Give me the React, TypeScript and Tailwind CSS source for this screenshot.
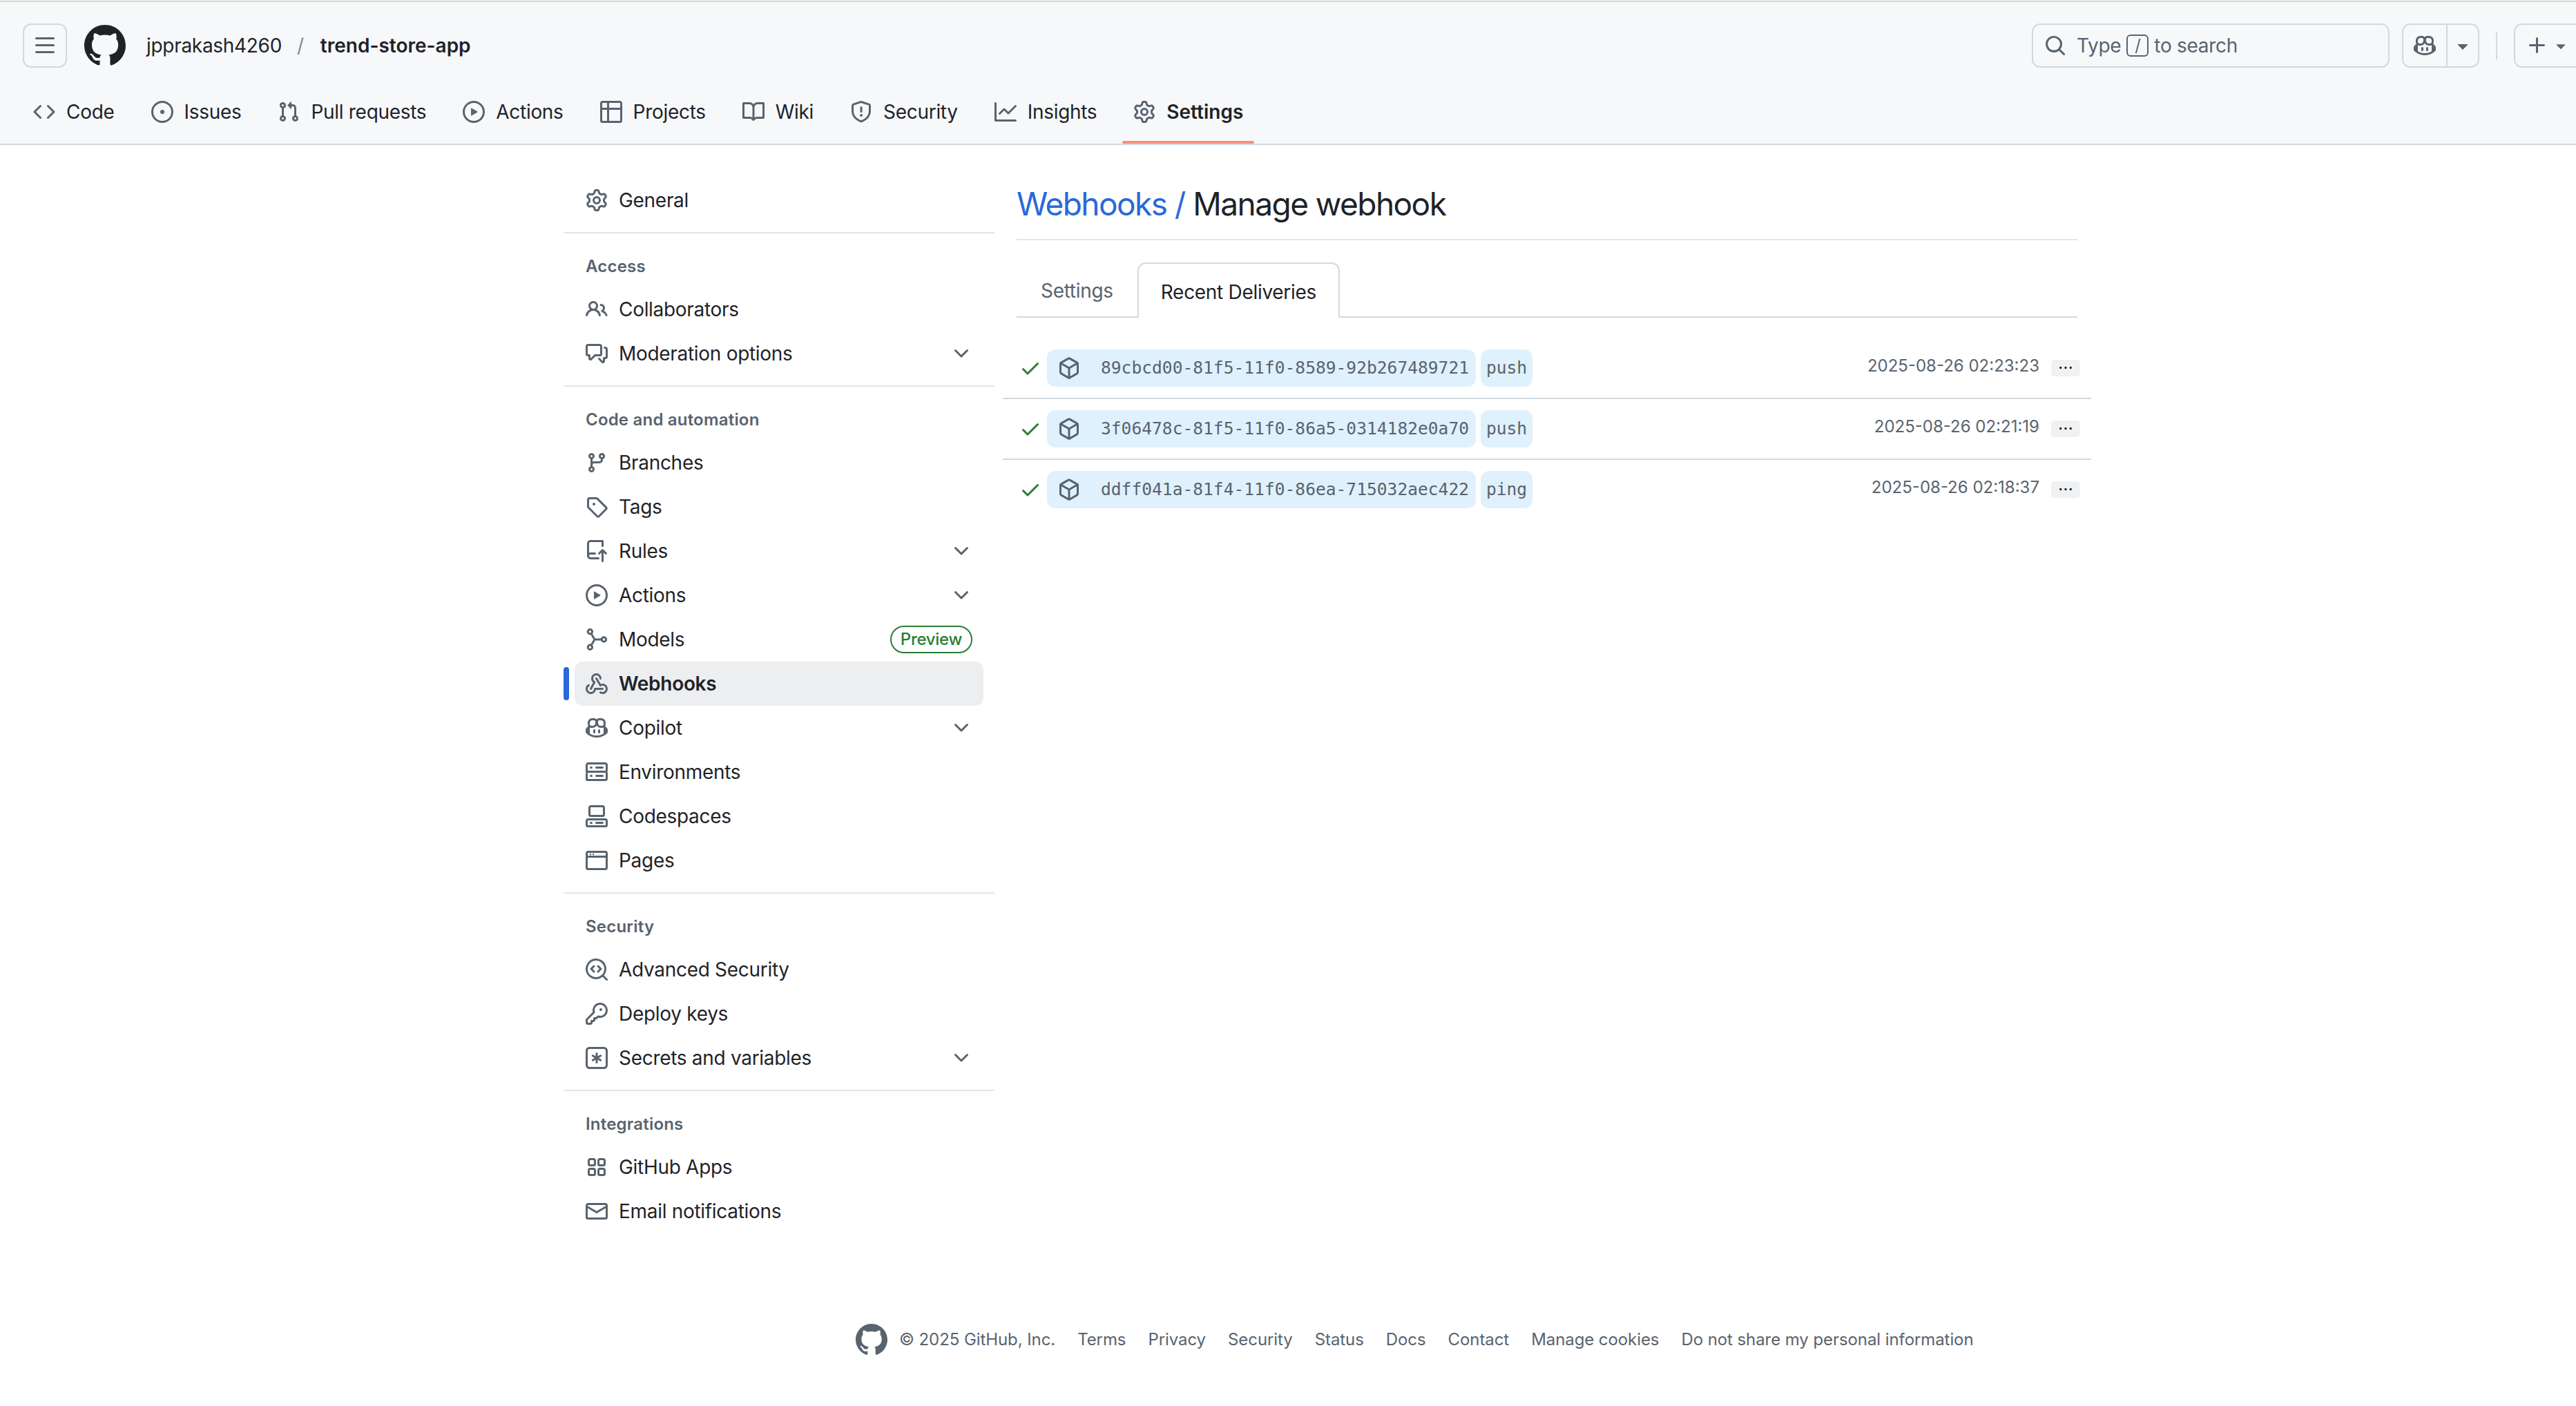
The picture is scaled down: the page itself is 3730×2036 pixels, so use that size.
import React from "react";

const icons: Record<string, string> = {
  bars: "M1 2.75A.75.75 0 0 1 1.75 2h12.5a.75.75 0 0 1 0 1.5H1.75A.75.75 0 0 1 1 2.75Zm0 5A.75.75 0 0 1 1.75 7h12.5a.75.75 0 0 1 0 1.5H1.75A.75.75 0 0 1 1 7.75ZM1.75 12h12.5a.75.75 0 0 1 0 1.5H1.75a.75.75 0 0 1 0-1.5Z",
  github: "M8 0c4.42 0 8 3.58 8 8a8.013 8.013 0 0 1-5.45 7.59c-.4.08-.55-.17-.55-.38 0-.27.01-1.13.01-2.2 0-.75-.25-1.23-.54-1.48 1.78-.2 3.65-.88 3.65-3.95 0-.88-.31-1.59-.82-2.15.08-.2.36-1.02-.08-2.12 0 0-.67-.22-2.2.82-.64-.18-1.32-.27-2-.27-.68 0-1.36.09-2 .27-1.53-1.03-2.2-.82-2.2-.82-.44 1.1-.16 1.92-.08 2.12-.51.56-.82 1.28-.82 2.15 0 3.06 1.86 3.75 3.64 3.95-.23.2-.44.55-.51 1.07-.46.21-1.61.55-2.33-.66-.15-.24-.6-.83-1.23-.82-.67.01-.27.38.01.53.34.19.73.9.82 1.13.16.45.68 1.31 2.69.94 0 .67.01 1.3.01 1.49 0 .21-.15.45-.55.38A7.995 7.995 0 0 1 0 8c0-4.42 3.58-8 8-8Z",
  code: "m11.28 3.22 4.25 4.25a.75.75 0 0 1 0 1.06l-4.25 4.25a.749.749 0 0 1-1.275-.326.749.749 0 0 1 .215-.734L13.94 8l-3.72-3.72a.749.749 0 0 1 .326-1.275.749.749 0 0 1 .734.215Zm-6.56 0a.751.751 0 0 1 1.042.018.751.751 0 0 1 .018 1.042L2.06 8l3.72 3.72a.749.749 0 0 1-.326 1.275.749.749 0 0 1-.734-.215L.47 8.53a.75.75 0 0 1 0-1.06Z",
  issue: "M8 9.5a1.5 1.5 0 1 0 0-3 1.5 1.5 0 0 0 0 3Z M8 0a8 8 0 1 1 0 16A8 8 0 0 1 8 0ZM1.5 8a6.5 6.5 0 1 0 13 0 6.5 6.5 0 0 0-13 0Z",
  pr: "M1.5 3.25a2.25 2.25 0 1 1 3 2.122v5.256a2.251 2.251 0 1 1-1.5 0V5.372A2.25 2.25 0 0 1 1.5 3.25Zm5.677-.177L9.573.677A.25.25 0 0 1 10 .854V2.5h1A2.5 2.5 0 0 1 13.5 5v5.628a2.251 2.251 0 1 1-1.5 0V5a1 1 0 0 0-1-1h-1v1.646a.25.25 0 0 1-.427.177L7.177 3.427a.25.25 0 0 1 0-.354ZM3.75 2.5a.75.75 0 1 0 0 1.5.75.75 0 0 0 0-1.5Zm0 9.5a.75.75 0 1 0 0 1.5.75.75 0 0 0 0-1.5Zm8.25.75a.75.75 0 1 0 1.5 0 .75.75 0 0 0-1.5 0Z",
  play: "M8 0a8 8 0 1 1 0 16A8 8 0 0 1 8 0ZM1.5 8a6.5 6.5 0 1 0 13 0 6.5 6.5 0 0 0-13 0Zm4.879-2.773 4.264 2.559a.25.25 0 0 1 0 .428l-4.264 2.559A.25.25 0 0 1 6 10.559V5.442a.25.25 0 0 1 .379-.215Z",
  table: "M0 1.75C0 .784.784 0 1.75 0h12.5C15.216 0 16 .784 16 1.75v12.5A1.75 1.75 0 0 1 14.25 16H1.75A1.75 1.75 0 0 1 0 14.25ZM6.5 6.5v8h7.75a.25.25 0 0 0 .25-.25V6.5Zm8-1.5V1.75a.25.25 0 0 0-.25-.25H6.5V5Zm-13 1.5v7.75c0 .138.112.25.25.25H5v-8ZM5 5V1.5H1.75a.25.25 0 0 0-.25.25V5Z",
  book: "M0 1.75A.75.75 0 0 1 .75 1h4.253c1.227 0 2.317.59 3 1.501A3.743 3.743 0 0 1 11.006 1h4.245a.75.75 0 0 1 .75.75v10.5a.75.75 0 0 1-.75.75h-4.507a2.25 2.25 0 0 0-1.591.659l-.622.621a.75.75 0 0 1-1.06 0l-.622-.621A2.25 2.25 0 0 0 5.258 13H.75a.75.75 0 0 1-.75-.75Zm7.251 10.324.004-5.073-.002-2.253A2.25 2.25 0 0 0 5.003 2.5H1.5v9h3.757a3.75 3.75 0 0 1 1.994.574ZM8.755 4.75l-.004 7.322a3.752 3.752 0 0 1 1.992-.572H14.5v-9h-3.495a2.25 2.25 0 0 0-2.25 2.25Z",
  shield: "M7.467.133a1.748 1.748 0 0 1 1.066 0l5.25 1.68A1.75 1.75 0 0 1 15 3.48V7c0 1.566-.32 3.182-1.303 4.682-.983 1.498-2.585 2.813-5.032 3.855a1.697 1.697 0 0 1-1.33 0c-2.447-1.042-4.049-2.357-5.032-3.855C1.32 10.182 1 8.566 1 7V3.48a1.75 1.75 0 0 1 1.217-1.667Zm.61 1.429a.25.25 0 0 0-.153 0l-5.25 1.68a.25.25 0 0 0-.174.238V7c0 1.358.275 2.666 1.057 3.86.784 1.194 2.121 2.34 4.366 3.297a.196.196 0 0 0 .154 0c2.245-.956 3.582-2.104 4.366-3.298C13.225 9.666 13.5 8.36 13.5 7V3.48a.251.251 0 0 0-.174-.237l-5.25-1.68ZM8.75 4.75v3a.75.75 0 0 1-1.5 0v-3a.75.75 0 0 1 1.5 0ZM9 10.5a1 1 0 1 1-2 0 1 1 0 0 1 2 0Z",
  graph: "M1.5 1.75V13.5h13.75a.75.75 0 0 1 0 1.5H.75a.75.75 0 0 1-.75-.75V1.75a.75.75 0 0 1 1.5 0Zm14.28 2.53-5.25 5.25a.75.75 0 0 1-1.06 0L7 7.06 4.28 9.78a.751.751 0 0 1-1.042-.018.751.751 0 0 1-.018-1.042l3.25-3.25a.75.75 0 0 1 1.06 0L10 7.94l4.72-4.72a.751.751 0 0 1 1.042.018.751.751 0 0 1 .018 1.042Z",
  gear: "M8 0a8.2 8.2 0 0 1 .701.031C9.444.095 9.99.645 10.16 1.29l.288 1.107c.018.066.079.158.212.224.231.114.454.243.668.386.123.082.233.09.299.071l1.103-.303c.644-.176 1.392.021 1.82.63.27.385.506.792.704 1.218.315.675.111 1.422-.364 1.891l-.814.806c-.049.048-.098.147-.088.294.016.257.016.515 0 .772-.01.147.038.246.088.294l.814.806c.475.469.679 1.216.364 1.891a7.977 7.977 0 0 1-.704 1.217c-.428.61-1.176.807-1.82.63l-1.102-.302c-.067-.019-.177-.011-.3.071a5.909 5.909 0 0 1-.668.386c-.133.066-.194.158-.211.224l-.29 1.106c-.168.646-.715 1.196-1.458 1.26a8.006 8.006 0 0 1-1.402 0c-.743-.064-1.289-.614-1.458-1.26l-.289-1.106c-.018-.066-.079-.158-.212-.224a5.738 5.738 0 0 1-.668-.386c-.123-.082-.233-.09-.299-.071l-1.103.303c-.644.176-1.392-.021-1.82-.63a8.12 8.12 0 0 1-.704-1.218c-.315-.675-.111-1.422.363-1.891l.815-.806c.05-.048.098-.147.088-.294a6.214 6.214 0 0 1 0-.772c.01-.147-.038-.246-.088-.294l-.815-.806C.635 6.045.431 5.298.746 4.623a7.92 7.92 0 0 1 .704-1.217c.428-.61 1.176-.807 1.82-.63l1.102.302c.067.019.177.011.3-.071.214-.143.437-.272.668-.386.133-.066.194-.158.211-.224l.29-1.106C6.009.645 6.556.095 7.299.03 7.53.01 7.764 0 8 0Zm-.571 1.525c-.036.003-.108.036-.137.146l-.289 1.105c-.147.561-.549.967-.998 1.189-.173.086-.34.183-.5.29-.417.278-.97.423-1.529.27l-1.103-.303c-.109-.03-.175.016-.195.045-.22.312-.412.644-.573.99-.014.031-.021.11.059.19l.815.806c.411.406.562.957.53 1.456a4.709 4.709 0 0 0 0 .582c.032.499-.119 1.05-.53 1.456l-.815.806c-.081.08-.073.159-.059.19.162.346.353.677.573.989.02.03.085.076.195.046l1.102-.303c.56-.153 1.113-.008 1.53.27.161.107.328.204.501.29.447.222.85.629.997 1.189l.289 1.105c.029.109.101.143.137.146a6.6 6.6 0 0 0 1.142 0c.036-.003.108-.036.137-.146l.289-1.105c.147-.561.549-.967.998-1.189.173-.086.34-.183.5-.29.417-.278.97-.423 1.529-.27l1.103.303c.109.029.175-.016.195-.045.22-.313.411-.644.573-.99.014-.031.021-.11-.059-.19l-.815-.806c-.411-.406-.562-.957-.53-1.456a4.709 4.709 0 0 0 0-.582c-.032-.499.119-1.05.53-1.456l.815-.806c.081-.08.073-.159.059-.19a6.464 6.464 0 0 0-.573-.989c-.02-.03-.085-.076-.195-.046l-1.102.303c-.56.153-1.113.008-1.53-.27a4.44 4.44 0 0 0-.501-.29c-.447-.222-.85-.629-.997-1.189l-.289-1.105c-.029-.11-.101-.143-.137-.146a6.6 6.6 0 0 0-1.142 0ZM11 8a3 3 0 1 1-6 0 3 3 0 0 1 6 0ZM9.5 8a1.5 1.5 0 1 0-3.001.001A1.5 1.5 0 0 0 9.5 8Z",
  people: "M2 5.5a3.5 3.5 0 1 1 5.898 2.549 5.508 5.508 0 0 1 3.034 4.084.75.75 0 1 1-1.482.235 4 4 0 0 0-7.9 0 .75.75 0 0 1-1.482-.236A5.507 5.507 0 0 1 3.102 8.05 3.493 3.493 0 0 1 2 5.5ZM11 4a3.001 3.001 0 0 1 2.22 5.018 5.01 5.01 0 0 1 2.56 3.012.749.749 0 0 1-.885.954.752.752 0 0 1-.549-.514 3.507 3.507 0 0 0-2.522-2.372.75.75 0 0 1-.574-.73v-.352a.75.75 0 0 1 .416-.672A1.5 1.5 0 0 0 11 5.5.75.75 0 0 1 11 4Zm-5.5-.5a2 2 0 1 0-.001 3.999A2 2 0 0 0 5.5 3.5Z",
  discussion: "M1.75 1h8.5c.966 0 1.75.784 1.75 1.75v5.5A1.75 1.75 0 0 1 10.25 10H7.061l-2.574 2.573A1.458 1.458 0 0 1 2 11.543V10h-.25A1.75 1.75 0 0 1 0 8.25v-5.5C0 1.784.784 1 1.75 1ZM1.5 2.75v5.5c0 .138.112.25.25.25h1a.75.75 0 0 1 .75.75v2.19l2.72-2.72a.749.749 0 0 1 .53-.22h3.5a.25.25 0 0 0 .25-.25v-5.5a.25.25 0 0 0-.25-.25h-8.5a.25.25 0 0 0-.25.25Zm13 2a.25.25 0 0 0-.25-.25h-.5a.75.75 0 0 1 0-1.5h.5c.966 0 1.75.784 1.75 1.75v5.5A1.75 1.75 0 0 1 14.25 12H14v1.543a1.458 1.458 0 0 1-2.487 1.03L9.22 12.28a.749.749 0 0 1 .326-1.275.749.749 0 0 1 .734.215l2.22 2.22v-2.19a.75.75 0 0 1 .75-.75h1a.25.25 0 0 0 .25-.25Z",
  branch: "M9.5 3.25a2.25 2.25 0 1 1 3 2.122V6A2.5 2.5 0 0 1 10 8.5H6a1 1 0 0 0-1 1v1.128a2.251 2.251 0 1 1-1.5 0V5.372a2.25 2.25 0 1 1 1.5 0v1.836A2.493 2.493 0 0 1 6 7h4a1 1 0 0 0 1-1v-.628A2.25 2.25 0 0 1 9.5 3.25Zm-6 0a.75.75 0 1 0 1.5 0 .75.75 0 0 0-1.5 0Zm8.25-.75a.75.75 0 1 0 0 1.5.75.75 0 0 0 0-1.5ZM4.25 12a.75.75 0 1 0 0 1.5.75.75 0 0 0 0-1.5Z",
  tag: "M1 7.775V2.75C1 1.784 1.784 1 2.75 1h5.025c.464 0 .91.184 1.238.513l6.25 6.25a1.75 1.75 0 0 1 0 2.474l-5.026 5.026a1.75 1.75 0 0 1-2.474 0l-6.25-6.25A1.752 1.752 0 0 1 1 7.775Zm1.5 0c0 .066.026.13.073.177l6.25 6.25a.25.25 0 0 0 .354 0l5.025-5.025a.25.25 0 0 0 0-.354l-6.25-6.25a.25.25 0 0 0-.177-.073H2.75a.25.25 0 0 0-.25.25ZM6 5a1 1 0 1 1 0 2 1 1 0 0 1 0-2Z",
  repoPush: "M1 2.5A2.5 2.5 0 0 1 3.5 0h8.75a.75.75 0 0 1 .75.75v3.5a.75.75 0 0 1-1.5 0V1.5h-8a1 1 0 0 0-1 1v6.708A2.493 2.493 0 0 1 3.5 9h3.25a.75.75 0 0 1 0 1.5H3.5a1 1 0 0 0 0 2h5.75a.75.75 0 0 1 0 1.5H3.5A2.5 2.5 0 0 1 1 11.5Zm13.23 7.79h-.001l-1.224-1.224v6.184a.75.75 0 0 1-1.5 0V9.066L10.28 10.29a.75.75 0 0 1-1.06-1.061l2.505-2.504a.75.75 0 0 1 1.06 0L15.29 9.23a.751.751 0 0 1-.018 1.042.751.751 0 0 1-1.042.018Z",
  chevron: "M12.78 5.22a.749.749 0 0 1 0 1.06l-4.25 4.25a.749.749 0 0 1-1.06 0L3.22 6.28a.749.749 0 1 1 1.06-1.06L8 8.939l3.72-3.719a.749.749 0 0 1 1.06 0Z",
  webhook: "M5.5 4.25a2.25 2.25 0 0 1 4.5 0 .75.75 0 0 0 1.5 0 3.75 3.75 0 1 0-6.14 2.889l-2.272 4.258a.75.75 0 0 0 1.324.706L7 7.25a.75.75 0 0 0-.309-1.016A2.25 2.25 0 0 1 5.5 4.25Z M7.364 3.607a.75.75 0 0 1 1.03.257l2.608 4.349a3.75 3.75 0 1 1-.628 6.785.75.75 0 0 1 .752-1.299 2.25 2.25 0 1 0-.033-3.88.75.75 0 0 1-1.03-.256L7.107 4.636a.75.75 0 0 1 .257-1.03Z M2.9 8.776A.75.75 0 0 1 2.625 9.8 2.25 2.25 0 1 0 6 11.75a.75.75 0 0 1 .75-.751h5.5a.75.75 0 0 1 0 1.5H7.425a3.751 3.751 0 1 1-5.55-3.998.75.75 0 0 1 1.024.274Z",
  copilot: "M7.998 15.035c-4.562 0-7.873-2.914-7.998-3.749V9.338c.085-.628.677-1.686 1.588-2.065.013-.07.024-.143.036-.218.029-.183.06-.384.126-.612-.201-.508-.254-1.084-.254-1.656 0-.87.128-1.769.693-2.484.579-.733 1.494-1.124 2.724-1.261 1.206-.134 2.262.034 2.944.765.05.053.096.108.139.165.044-.057.094-.112.143-.165.682-.731 1.738-.899 2.944-.765 1.23.137 2.145.528 2.724 1.261.566.715.693 1.614.693 2.484 0 .572-.053 1.148-.254 1.656.066.228.098.429.126.612.012.076.024.148.037.218.924.385 1.522 1.471 1.591 2.095v1.872c0 .766-3.351 3.795-8.002 3.795Zm0-1.485c2.28 0 4.584-1.11 5.002-1.433V7.862l-.023-.116c-.49.21-1.075.291-1.727.291-1.146 0-2.059-.327-2.71-.991A3.222 3.222 0 0 1 8 6.303a3.24 3.24 0 0 1-.544.743c-.65.664-1.563.991-2.71.991-.652 0-1.236-.081-1.727-.291l-.023.116v4.255c.419.323 2.722 1.433 5.002 1.433ZM6.762 2.83c-.193-.206-.637-.413-1.682-.297-1.019.113-1.479.404-1.713.7-.247.312-.369.789-.369 1.554 0 .793.129 1.171.308 1.371.162.181.519.379 1.442.379.853 0 1.339-.235 1.638-.54.315-.322.527-.827.617-1.553.117-.935-.037-1.395-.241-1.614Zm4.155-.297c-1.044-.116-1.488.091-1.681.297-.204.219-.359.679-.242 1.614.091.726.303 1.231.618 1.553.299.305.784.54 1.638.54.922 0 1.28-.198 1.442-.379.179-.2.308-.578.308-1.371 0-.765-.123-1.242-.37-1.554-.233-.296-.693-.587-1.713-.7Z M6.25 9.037a.75.75 0 0 1 .75.75v1.501a.75.75 0 0 1-1.5 0V9.787a.75.75 0 0 1 .75-.75Zm4.25.75v1.501a.75.75 0 0 1-1.5 0V9.787a.75.75 0 0 1 1.5 0Z",
  server: "M1.75 1h12.5c.966 0 1.75.784 1.75 1.75v4c0 .372-.116.717-.314 1 .198.283.314.628.314 1v4a1.75 1.75 0 0 1-1.75 1.75H1.75A1.75 1.75 0 0 1 0 13.75v-4c0-.358.109-.707.314-1a1.739 1.739 0 0 1-.314-1v-4C0 1.784.784 1 1.75 1ZM1.5 2.75v4c0 .138.112.25.25.25h12.5a.25.25 0 0 0 .25-.25v-4a.25.25 0 0 0-.25-.25H1.75a.25.25 0 0 0-.25.25Zm.25 5.75a.25.25 0 0 0-.25.25v4c0 .138.112.25.25.25h12.5a.25.25 0 0 0 .25-.25v-4a.25.25 0 0 0-.25-.25ZM7 4.75A.75.75 0 0 1 7.75 4h4.5a.75.75 0 0 1 0 1.5h-4.5A.75.75 0 0 1 7 4.75ZM7.75 10h4.5a.75.75 0 0 1 0 1.5h-4.5a.75.75 0 0 1 0-1.5ZM3 4.75A.75.75 0 0 1 3.75 4h.5a.75.75 0 0 1 0 1.5h-.5A.75.75 0 0 1 3 4.75ZM3.75 10h.5a.75.75 0 0 1 0 1.5h-.5a.75.75 0 0 1 0-1.5Z",
  codespaces: "M0 11.25c0-.966.784-1.75 1.75-1.75h12.5c.966 0 1.75.784 1.75 1.75v3A1.75 1.75 0 0 1 14.25 16H1.75A1.75 1.75 0 0 1 0 14.25Zm2-9.5C2 .784 2.784 0 3.75 0h8.5C13.216 0 14 .784 14 1.75v5a1.75 1.75 0 0 1-1.75 1.75h-8.5A1.75 1.75 0 0 1 2 6.75Zm1.75-.25a.25.25 0 0 0-.25.25v5c0 .138.112.25.25.25h8.5a.25.25 0 0 0 .25-.25v-5a.25.25 0 0 0-.25-.25Zm-2 9.5a.25.25 0 0 0-.25.25v3c0 .138.112.25.25.25h12.5a.25.25 0 0 0 .25-.25v-3a.25.25 0 0 0-.25-.25Z M7 12.75a.75.75 0 0 1 .75-.75h4.5a.75.75 0 0 1 0 1.5h-4.5a.75.75 0 0 1-.75-.75Zm-4 0a.75.75 0 0 1 .75-.75h.5a.75.75 0 0 1 0 1.5h-.5a.75.75 0 0 1-.75-.75Z",
  browser: "M0 2.75C0 1.784.784 1 1.75 1h12.5c.966 0 1.75.784 1.75 1.75v10.5A1.75 1.75 0 0 1 14.25 15H1.75A1.75 1.75 0 0 1 0 13.25ZM14.5 6h-13v7.25c0 .138.112.25.25.25h12.5a.25.25 0 0 0 .25-.25Zm0-3.25a.25.25 0 0 0-.25-.25H1.75a.25.25 0 0 0-.25.25V4.5h13ZM3 3h1v1H3Zm2 0h1v1H5Z",
  codescan: "M8.47 4.97a.75.75 0 0 0 0 1.06L9.94 7.5 8.47 8.97a.75.75 0 1 0 1.06 1.06l2-2a.75.75 0 0 0 0-1.06l-2-2a.75.75 0 0 0-1.06 0ZM6.53 6.03a.75.75 0 0 0-1.06-1.06l-2 2a.75.75 0 0 0 0 1.06l2 2a.75.75 0 1 0 1.06-1.06L5.06 7.5l1.47-1.47Z M12.246 13.307a7.501 7.501 0 1 1 1.06-1.06l2.474 2.473a.749.749 0 0 1-.326 1.275.749.749 0 0 1-.734-.215ZM1.5 7.5a6.002 6.002 0 0 0 3.608 5.504 6.002 6.002 0 0 0 6.486-1.117.748.748 0 0 1 .292-.293A6 6 0 1 0 1.5 7.5Z",
  key: "M10.5 0a5.499 5.499 0 1 1-1.288 10.848l-.932.932a.749.749 0 0 1-.53.22H7v.75a.749.749 0 0 1-.22.53l-.5.5a.749.749 0 0 1-.53.22H5v.75a.749.749 0 0 1-.22.53l-.5.5a.749.749 0 0 1-.53.22h-2A1.75 1.75 0 0 1 0 14.25v-2c0-.199.079-.389.22-.53l4.932-4.932A5.5 5.5 0 0 1 10.5 0Zm-4 5.5c-.001.431.069.86.205 1.269a.75.75 0 0 1-.181.768L1.5 12.56v1.69c0 .138.112.25.25.25h1.69l.06-.06v-1.19a.75.75 0 0 1 .75-.75h1.19l.06-.06v-1.19a.75.75 0 0 1 .75-.75h1.19l1.023-1.025a.75.75 0 0 1 .768-.18A4 4 0 1 0 6.5 5.5ZM11 6a1 1 0 1 1 0-2 1 1 0 0 1 0 2Z",
  keyAsterisk: "M0 2.75A2.75 2.75 0 0 1 2.75 0h10.5A2.75 2.75 0 0 1 16 2.75v10.5A2.75 2.75 0 0 1 13.25 16H2.75A2.75 2.75 0 0 1 0 13.25ZM2.75 1.5c-.69 0-1.25.56-1.25 1.25v10.5c0 .69.56 1.25 1.25 1.25h10.5c.69 0 1.25-.56 1.25-1.25V2.75c0-.69-.56-1.25-1.25-1.25Z M8 4a.75.75 0 0 1 .75.75V6.7l1.69-.975a.75.75 0 0 1 .75 1.3L9.5 8l1.69.976a.75.75 0 0 1-.75 1.298L8.75 9.3v1.951a.75.75 0 0 1-1.5 0V9.299l-1.69.976a.75.75 0 0 1-.75-1.3L6.5 8l-1.69-.975a.75.75 0 0 1 .75-1.3l1.69.976V4.75A.75.75 0 0 1 8 4Z",
  apps: "M1.5 3.25c0-.966.784-1.75 1.75-1.75h2.5c.966 0 1.75.784 1.75 1.75v2.5A1.75 1.75 0 0 1 5.75 7.5h-2.5A1.75 1.75 0 0 1 1.5 5.75Zm7 0c0-.966.784-1.75 1.75-1.75h2.5c.966 0 1.75.784 1.75 1.75v2.5a1.75 1.75 0 0 1-1.75 1.75h-2.5A1.75 1.75 0 0 1 8.5 5.75Zm-7 7c0-.966.784-1.75 1.75-1.75h2.5c.966 0 1.75.784 1.75 1.75v2.5a1.75 1.75 0 0 1-1.75 1.75h-2.5a1.75 1.75 0 0 1-1.75-1.75Zm7 0c0-.966.784-1.75 1.75-1.75h2.5c.966 0 1.75.784 1.75 1.75v2.5a1.75 1.75 0 0 1-1.75 1.75h-2.5a1.75 1.75 0 0 1-1.75-1.75ZM3.25 3a.25.25 0 0 0-.25.25v2.5c0 .138.112.25.25.25h2.5A.25.25 0 0 0 6 5.75v-2.5A.25.25 0 0 0 5.75 3Zm7 0a.25.25 0 0 0-.25.25v2.5c0 .138.112.25.25.25h2.5a.25.25 0 0 0 .25-.25v-2.5a.25.25 0 0 0-.25-.25Zm-7 7a.25.25 0 0 0-.25.25v2.5c0 .138.112.25.25.25h2.5a.25.25 0 0 0 .25-.25v-2.5a.25.25 0 0 0-.25-.25Zm7 0a.25.25 0 0 0-.25.25v2.5c0 .138.112.25.25.25h2.5a.25.25 0 0 0 .25-.25v-2.5a.25.25 0 0 0-.25-.25Z",
  mail: "M1.75 2h12.5c.966 0 1.75.784 1.75 1.75v8.5A1.75 1.75 0 0 1 14.25 14H1.75A1.75 1.75 0 0 1 0 12.25v-8.5C0 2.784.784 2 1.75 2ZM1.5 12.251c0 .138.112.25.25.25h12.5a.25.25 0 0 0 .25-.25V5.809L8.38 9.397a.75.75 0 0 1-.76 0L1.5 5.809v6.442Zm13-8.181v-.32a.25.25 0 0 0-.25-.25H1.75a.25.25 0 0 0-.25.25v.32L8 7.88Z",
  packageBox: "m8.878.392 5.25 3.045c.54.314.872.89.872 1.514v6.098a1.75 1.75 0 0 1-.872 1.514l-5.25 3.045a1.75 1.75 0 0 1-1.756 0l-5.25-3.045A1.75 1.75 0 0 1 1 11.049V4.951c0-.624.332-1.201.872-1.514L7.122.392a1.75 1.75 0 0 1 1.756 0ZM7.875 1.69l-4.63 2.685L8 7.133l4.755-2.758-4.63-2.685a.248.248 0 0 0-.25 0ZM2.5 5.677v5.372c0 .09.047.171.125.216l4.625 2.683V8.432Zm6.25 8.271 4.625-2.683a.25.25 0 0 0 .125-.216V5.677L8.75 8.432Z",
  check: "M13.78 4.22a.75.75 0 0 1 0 1.06l-7.25 7.25a.75.75 0 0 1-1.06 0L2.22 9.28a.751.751 0 0 1 .018-1.042.751.751 0 0 1 1.042-.018L6 10.94l6.72-6.72a.75.75 0 0 1 1.06 0Z",
  search: "M10.68 11.74a6 6 0 0 1-7.922-8.982 6 6 0 0 1 8.982 7.922l3.04 3.04a.749.749 0 0 1-.326 1.275.749.749 0 0 1-.734-.215ZM11.5 7a4.499 4.499 0 1 0-8.997 0A4.499 4.499 0 0 0 11.5 7Z",
  plus: "M7.75 2a.75.75 0 0 1 .75.75V7h4.25a.75.75 0 0 1 0 1.5H8.5v4.25a.75.75 0 0 1-1.5 0V8.5H2.75a.75.75 0 0 1 0-1.5H7V2.75A.75.75 0 0 1 7.75 2Z",
  caret: "m4.427 7.427 3.396 3.396a.25.25 0 0 0 .354 0l3.396-3.396A.25.25 0 0 0 11.396 7H4.604a.25.25 0 0 0-.177.427Z",
  kebab: "M8 9a1.5 1.5 0 1 0 0-3 1.5 1.5 0 0 0 0 3ZM1.5 9a1.5 1.5 0 1 0 0-3 1.5 1.5 0 0 0 0 3Zm13 0a1.5 1.5 0 1 0 0-3 1.5 1.5 0 0 0 0 3Z",
};

const Icon = ({ name, className = "w-8 h-8 text-[#59636e]" }: { name: string; className?: string }) => (
  <svg viewBox="0 0 16 16" fill="currentColor" className={`shrink-0 ${className}`}>
    <path d={icons[name]} />
  </svg>
);

// the models icon has no path in my set, so it is drawn with strokes
const ModelIcon = () => (
  <svg viewBox="0 0 16 16" fill="none" stroke="currentColor" strokeWidth="1.5" className="w-8 h-8 shrink-0 text-[#59636e]">
    <circle cx="3.2" cy="2.4" r="1.6" />
    <circle cx="3.2" cy="13.6" r="1.6" />
    <circle cx="13.2" cy="8" r="1.6" />
    <path d="M4 3.8 6.5 8 4 12.2M6.5 8h5" />
  </svg>
);

const repoTabs = [
  { icon: "code", label: "Code" },
  { icon: "issue", label: "Issues" },
  { icon: "pr", label: "Pull requests" },
  { icon: "play", label: "Actions" },
  { icon: "table", label: "Projects" },
  { icon: "book", label: "Wiki" },
  { icon: "shield", label: "Security" },
  { icon: "graph", label: "Insights" },
  { icon: "gear", label: "Settings", active: true },
];

type NavItem = { icon: string; label: string; chevron?: boolean; preview?: boolean; active?: boolean };

const sections: { heading?: string; items: NavItem[] }[] = [
  { items: [{ icon: "gear", label: "General" }] },
  {
    heading: "Access",
    items: [
      { icon: "people", label: "Collaborators" },
      { icon: "discussion", label: "Moderation options", chevron: true },
    ],
  },
  {
    heading: "Code and automation",
    items: [
      { icon: "branch", label: "Branches" },
      { icon: "tag", label: "Tags" },
      { icon: "repoPush", label: "Rules", chevron: true },
      { icon: "play", label: "Actions", chevron: true },
      { icon: "model", label: "Models", preview: true },
      { icon: "webhook", label: "Webhooks", active: true },
      { icon: "copilot", label: "Copilot", chevron: true },
      { icon: "server", label: "Environments" },
      { icon: "codespaces", label: "Codespaces" },
      { icon: "browser", label: "Pages" },
    ],
  },
  {
    heading: "Security",
    items: [
      { icon: "codescan", label: "Advanced Security" },
      { icon: "key", label: "Deploy keys" },
      { icon: "keyAsterisk", label: "Secrets and variables", chevron: true },
    ],
  },
  {
    heading: "Integrations",
    items: [
      { icon: "apps", label: "GitHub Apps" },
      { icon: "mail", label: "Email notifications" },
    ],
  },
];

const deliveries = [
  { guid: "89cbcd00-81f5-11f0-8589-92b267489721", event: "push", time: "2025-08-26 02:23:23" },
  { guid: "3f06478c-81f5-11f0-86a5-0314182e0a70", event: "push", time: "2025-08-26 02:21:19" },
  { guid: "ddff041a-81f4-11f0-86ea-715032aec422", event: "ping", time: "2025-08-26 02:18:37" },
];

const footerLinks = ["Terms", "Privacy", "Security", "Status", "Docs", "Contact", "Manage cookies", "Do not share my personal information"];

const Header = () => (
  <header className="h-[207px] pt-[31px] bg-[#f6f8fa] border-b-2 border-[#d1d9e0] tracking-[-0.3px]">
    <div className="flex items-center h-[64px] pl-[33px]">
      <button className="w-[64px] h-[64px] flex items-center justify-center border-2 border-[#d1d9e0] rounded-xl">
        <Icon name="bars" />
      </button>
      <Icon name="github" className="w-[60px] h-[60px] ml-[25px] text-[#1f2328]" />
      <span className="ml-[30px] text-[28px] text-[#1f2328]">jpprakash4260</span>
      <span className="ml-[22px] text-[28px] text-[#818b98]">/</span>
      <span className="ml-[24px] text-[28px] font-semibold tracking-normal text-[#1f2328]">trend-store-app</span>
      <div className="ml-auto flex items-center">
        <div className="w-[518px] h-[64px] flex items-center gap-[15px] px-4 border-2 border-[#d1d9e0] rounded-xl text-[28px] text-[#59636e]">
          <Icon name="search" />
          <span className="flex items-center gap-2">
            Type
            <span className="w-[32px] h-[32px] flex items-center justify-center border-2 border-[#59636e] rounded-md text-[24px]">/</span>
            to search
          </span>
        </div>
        <div className="ml-[18px] w-[112px] h-[64px] flex border-2 border-[#d1d9e0] rounded-xl">
          <div className="w-[64px] flex items-center justify-center border-r-2 border-[#d1d9e0]">
            <Icon name="copilot" />
          </div>
          <div className="flex-1 flex items-center justify-center">
            <Icon name="caret" />
          </div>
        </div>
        <div className="mx-[24px] w-[2px] h-[40px] bg-[#d1d9e0]" />
        <div className="w-[90px] h-[64px] flex items-center pl-4 gap-1 border-2 border-r-0 border-[#d1d9e0] rounded-l-xl">
          <Icon name="plus" />
          <Icon name="caret" className="w-7 h-7 text-[#59636e]" />
        </div>
      </div>
    </div>
    <nav className="flex gap-[21px] h-[94px] mt-[16px] pl-8 text-[28px] text-[#1f2328]">
      {repoTabs.map((t) => (
        <div key={t.label} className="relative flex items-center gap-4 px-4 pt-[2px]">
          <Icon name={t.icon} />
          <span className={t.active ? "font-semibold tracking-normal" : ""}>{t.label}</span>
          {t.active && <span className="absolute left-0 right-0 bottom-0 h-[4px] rounded-sm bg-[#f4917a]" />}
        </div>
      ))}
    </nav>
  </header>
);

const Sidebar = () => (
  <aside className="w-[624px] shrink-0 tracking-[-0.3px]">
    {sections.map((s, i) => (
      <div key={i}>
        {i > 0 && <div className="mt-[14px] h-[2px] bg-[#e3e6ea]" />}
        {s.heading && <div className="pt-[33px] pb-[15px] pl-8 text-[24px] leading-[30px] font-semibold tracking-[0.2px] text-[#59636e]">{s.heading}</div>}
        {s.items.map((item) => (
          <div key={item.label} className="relative">
            {item.active && <span className="absolute left-0 top-2 w-2 h-12 rounded-full bg-[#2a68d8]" />}
            <div className={`mx-4 h-[64px] px-4 flex items-center gap-4 rounded-xl text-[28px] text-[#1f2328] ${item.active ? "bg-[#eceef0] font-semibold" : ""}`}>
              {item.icon === "model" ? <ModelIcon /> : <Icon name={item.icon} />}
              <span>{item.label}</span>
              {item.chevron && <Icon name="chevron" className="ml-auto w-8 h-8 text-[#59636e]" />}
              {item.preview && (
                <span className="ml-auto h-[40px] px-[13px] flex items-center rounded-full border-2 border-[#2a7d35] text-[24px] font-medium text-[#2a7d35]">Preview</span>
              )}
            </div>
          </div>
        ))}
      </div>
    ))}
  </aside>
);

const Deliveries = () => (
  <div className="ml-[-20px] mr-[-20px] mt-[30px]">
    {deliveries.map((d, i) => (
      <div key={d.guid} className={`flex items-center py-4 pl-[28px] pr-[16px] ${i > 0 ? "border-t-2 border-[#d1d9e0]" : ""}`}>
        <Icon name="check" className="w-8 h-8 text-[#2a7d35] -ml-[4px]" />
        <div className="ml-[8px] flex items-center gap-[7px] font-['DejaVu_Sans_Mono',monospace] text-[24.6px] text-[#59636e]">
          <span className="h-[54px] w-[621px] flex items-center rounded-xl bg-[#dff1fd] pl-4">
            <Icon name="packageBox" />
            <span className="ml-[30px]">{d.guid}</span>
          </span>
          <span className="h-[54px] w-[75px] flex items-center justify-center rounded-xl bg-[#dff1fd]">{d.event}</span>
        </div>
        <span className="ml-auto -mt-[6px] text-[24px] text-[#59636e]">{d.time}</span>
        <span className="ml-[17px] w-[42px] h-[24px] flex items-center justify-center rounded-[5px] bg-[#eff1f3]">
          <Icon name="kebab" className="w-[18px] h-[18px] text-[#1f2328]" />
        </span>
      </div>
    ))}
  </div>
);

const Main = () => (
  <main className="ml-[32px] w-[1536px]">
    <h2 className="h-[90px] text-[46px] leading-[74px] tracking-[-1.55px] border-b-2 border-[#e3e6ea] pb-[14px] text-[#1f2328]">
      <span className="text-[#2a68d8]">Webhooks /</span> Manage webhook
    </h2>
    <div className="mt-[32px] flex items-start h-[80px] border-b-2 border-[#d1d9e0] text-[28px] tracking-[-0.3px]">
      <span className="h-[78px] flex items-center pt-[4px] px-[35px] text-[#59636e]">Settings</span>
      <span className="h-[80px] flex items-center pt-[4px] px-[32px] border-2 border-b-0 border-[#d1d9e0] rounded-t-xl bg-white text-[#1f2328]">Recent Deliveries</span>
    </div>
    <Deliveries />
  </main>
);

const Footer = () => (
  <footer className="mt-[130px] pl-[1239px] flex items-center h-[48px] text-[24px] tracking-[-0.08px] text-[#59636e]">
    <Icon name="github" className="w-[46px] h-[46px] text-[#59636e]" />
    <span className="ml-[17px]">© 2025 GitHub, Inc.</span>
    <div className="ml-[32px] flex gap-8">
      {footerLinks.map((l) => (
        <span key={l}>{l}</span>
      ))}
    </div>
  </footer>
);

export default function App() {
  return (
    <div className="w-[3730px] h-[2036px] overflow-hidden bg-white font-['Inter',sans-serif]">
      <div className="h-[3px] bg-[#f0f0ee] border-b-2 border-[#d9dbd8]" />
      <Header />
      <div className="flex pl-[816px] pt-[48px]">
        <Sidebar />
        <Main />
      </div>
      <Footer />
    </div>
  );
}
